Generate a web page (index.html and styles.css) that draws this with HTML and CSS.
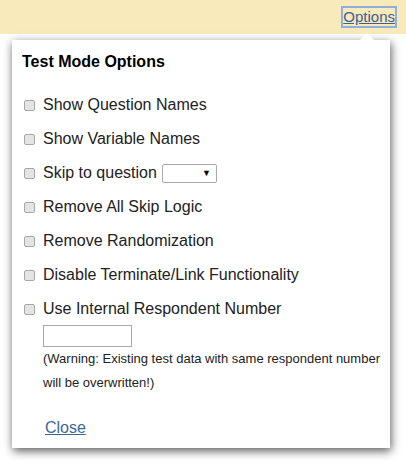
FILE: index.html
```html
<!DOCTYPE html>
<html lang="en">
<head>
  <meta charset="UTF-8">
  <title>Test Mode Options</title>
  <link rel="stylesheet" href="styles.css">
</head>
<body>
  <div class="topbar">
    <a href="#" class="options-link">Options</a>
  </div>
  <div class="popup">
    <div class="arrow"></div>
    <h3>Test Mode Options</h3>
    <div class="opt"><input type="checkbox"> Show Question Names</div>
    <div class="opt"><input type="checkbox"> Show Variable Names</div>
    <div class="opt"><input type="checkbox"> Skip to question <span class="fake-select"><span class="caret">&#9660;</span></span></div>
    <div class="opt"><input type="checkbox"> Remove All Skip Logic</div>
    <div class="opt"><input type="checkbox"> Remove Randomization</div>
    <div class="opt"><input type="checkbox"> Disable Terminate/Link Functionality</div>
    <div class="opt"><input type="checkbox"> Use Internal Respondent Number</div>
    <div class="resp">
      <input type="text" class="resp-num">
      <p class="warning">(Warning: Existing test data with same respondent number will be overwritten!)</p>
    </div>
    <a href="#" class="close">Close</a>
  </div>
</body>
</html>
```

FILE: styles.css
```css
body {
  margin: 0;
  font-family: "Liberation Sans", Arial, sans-serif;
  background: #fff;
  width: 406px;
  height: 460px;
  overflow: hidden;
}
.topbar {
  background: #f8eabb;
  height: 34px;
  display: flex;
  justify-content: flex-end;
  align-items: flex-start;
  padding-right: 11px;
  box-sizing: border-box;
}
.options-link {
  margin-top: 8px;
  font-size: 15px;
  color: #3b5f97;
  text-decoration: underline;
  outline: 2px solid #8fb0dd;
  line-height: 18px;
}
.popup {
  position: relative;
  margin: 6px 16px 0 12px;
  background: #fff;
  height: 408px;
  box-shadow: 1px 3px 9px rgba(0,0,0,0.65);
  padding: 12px 4px 0 10px;
  box-sizing: border-box;
}
.arrow {
  position: absolute;
  top: -7px;
  right: 16px;
  width: 0;
  height: 0;
  border-left: 7px solid transparent;
  border-right: 7px solid transparent;
  border-bottom: 7px solid #fff;
}
h3 {
  margin: 0 0 16px 0;
  font-size: 16px;
  font-weight: bold;
  color: #000;
  line-height: 20px;
}
.opt {
  font-size: 16px;
  color: #222;
  height: 34px;
  display: flex;
  align-items: center;
}
.opt input {
  appearance: none;
  width: 11px;
  height: 11px;
  margin: 0 8px 0 2px;
  background: #e4e4e4;
  border: 1px solid #a8a8a8;
  border-radius: 2px;
  box-sizing: border-box;
}
.fake-select {
  display: inline-flex;
  justify-content: flex-end;
  align-items: center;
  width: 55px;
  height: 19px;
  border: 1px solid #a9a9a9;
  border-radius: 2px;
  margin-left: 5px;
  box-sizing: border-box;
  padding-right: 5px;
}
.caret {
  font-size: 9px;
  color: #000;
}
.resp {
  padding-left: 21px;
  margin-top: -1px;
}
.resp-num {
  width: 89px;
  height: 22px;
  border: 1px solid #a9a9a9;
  box-sizing: border-box;
  margin: 0;
  display: block;
}
.warning {
  margin: 0;
  font-size: 13px;
  line-height: 24px;
  color: #222;
}
.close {
  display: inline-block;
  margin: 24px 0 0 23px;
  font-size: 16px;
  color: #3d6894;
  text-decoration: underline;
}
```
